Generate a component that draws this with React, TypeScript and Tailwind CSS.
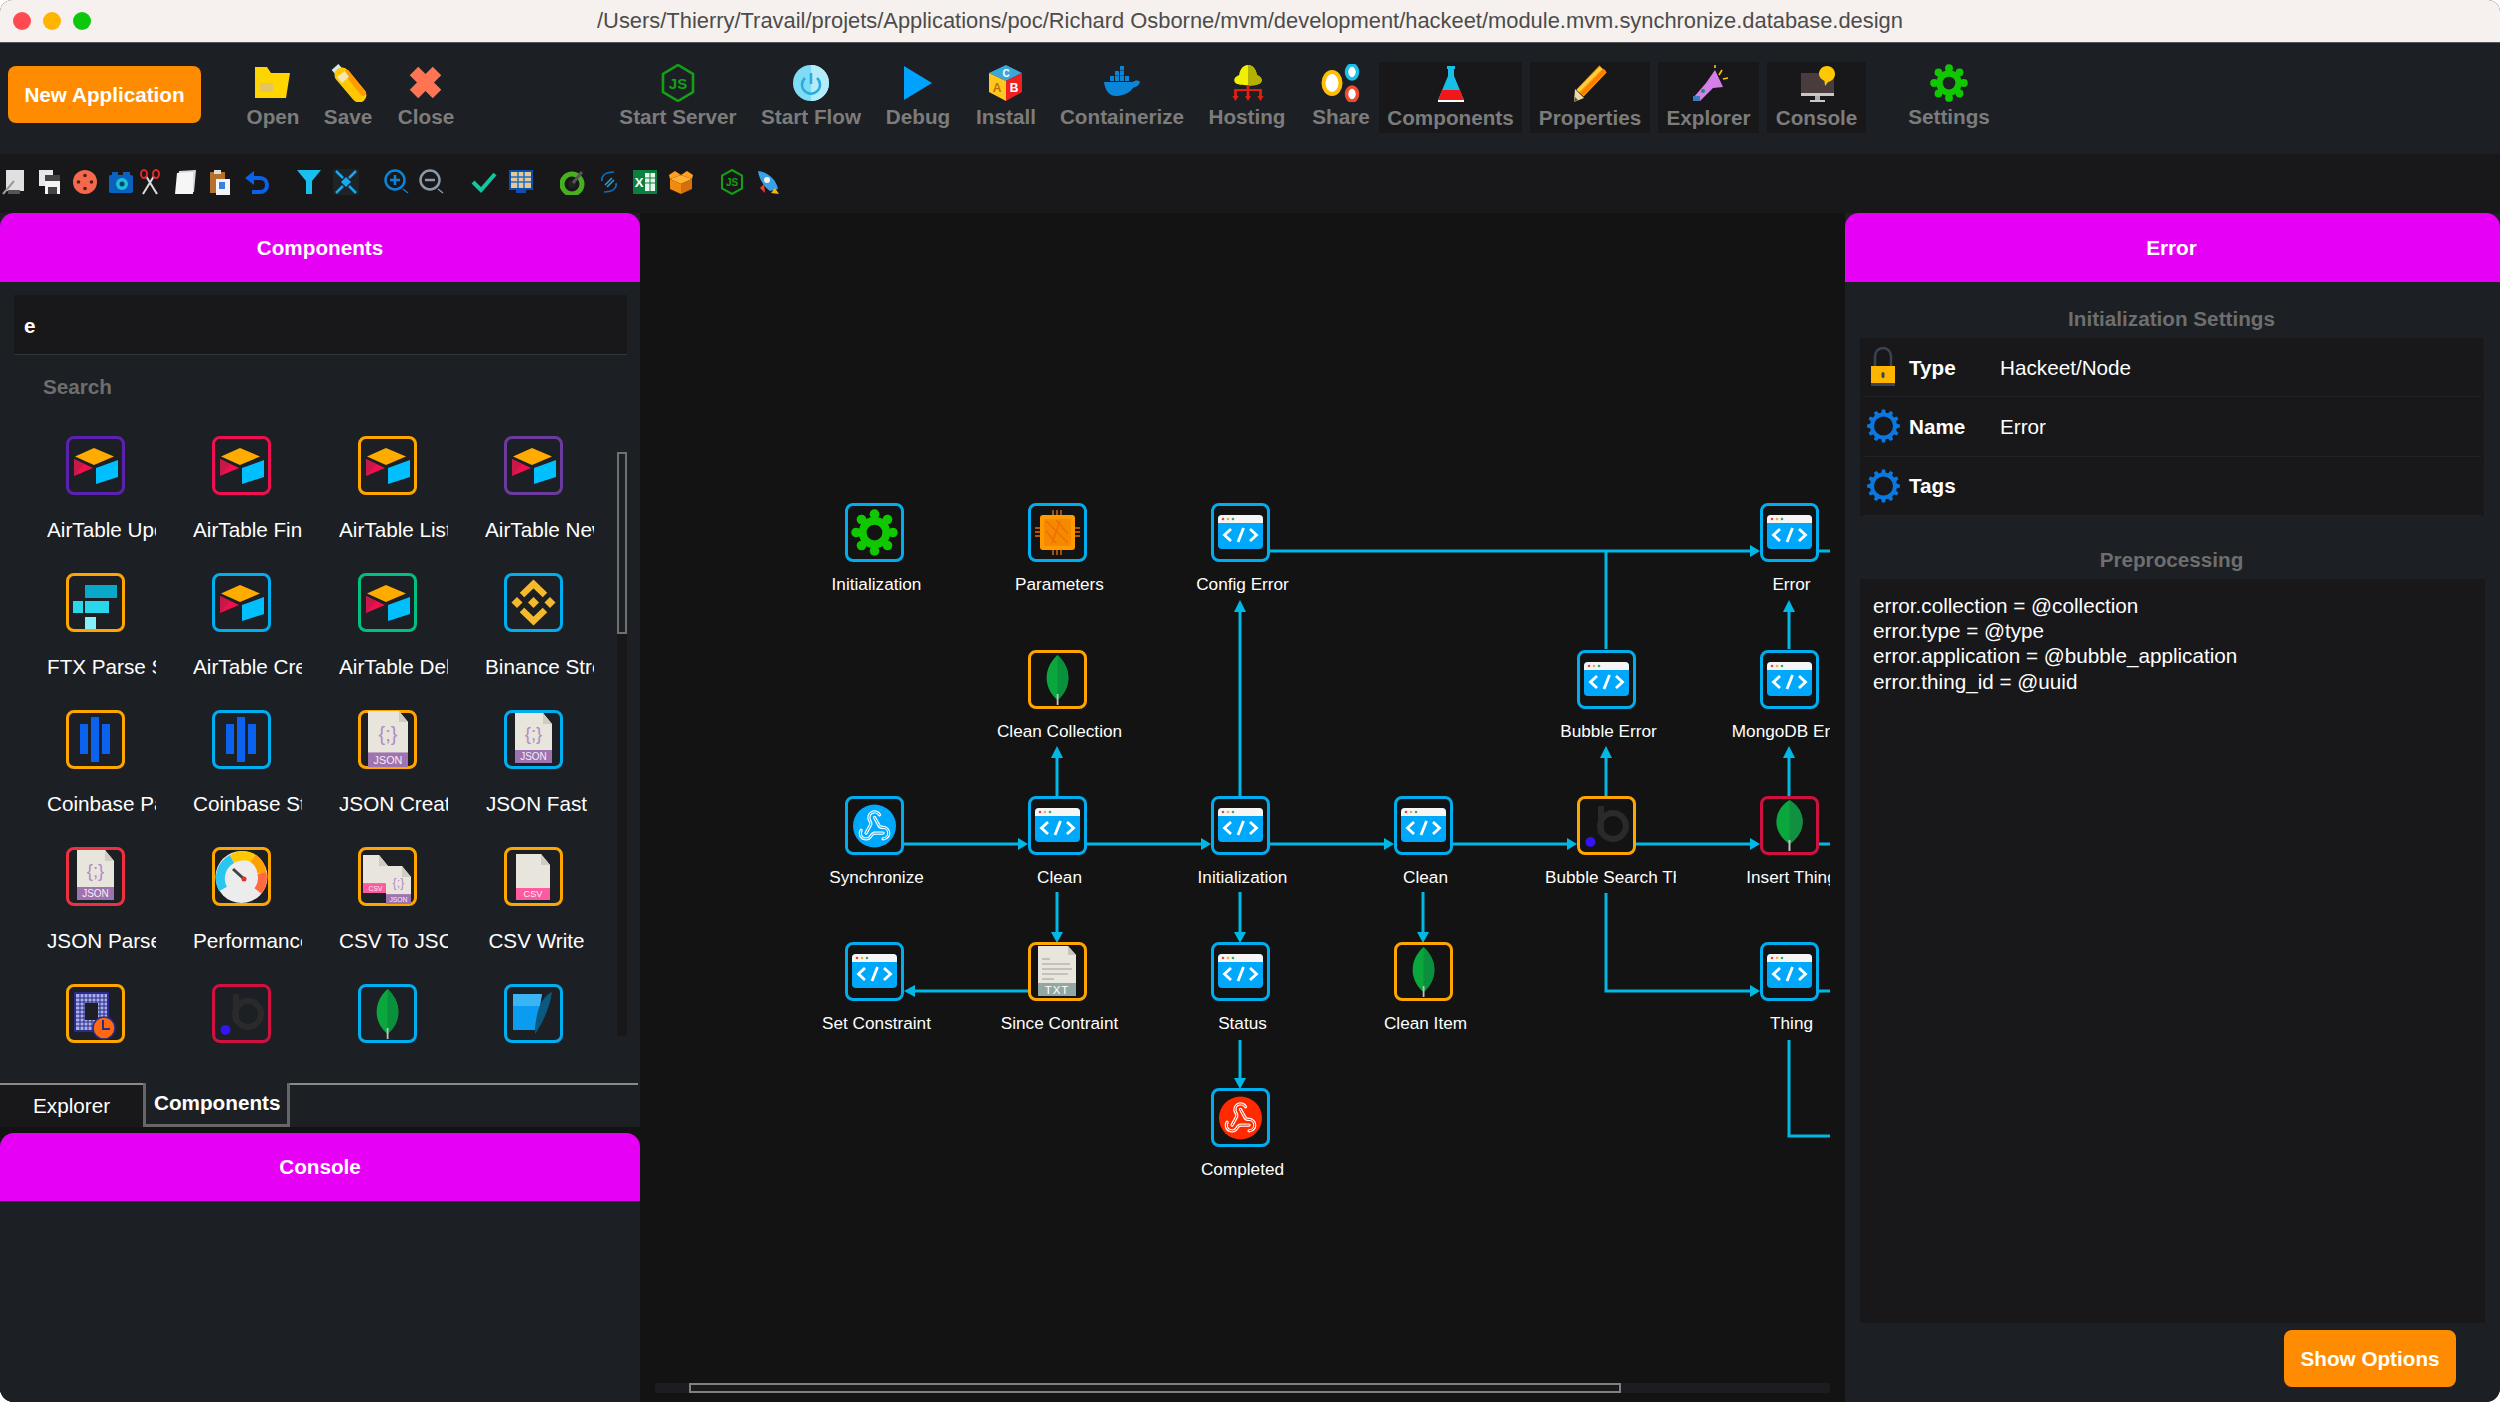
import React from "react";

function gear(cx: number, cy: number, ro: number, ri: number, n: number, hole: number) {
  let d = "";
  const step = (Math.PI * 2) / n;
  for (let i = 0; i < n; i++) {
    const a = i * step - Math.PI / 2;
    const pts: [number, number][] = [
      [ri, a - step * 0.32],
      [ro, a - step * 0.18],
      [ro, a + step * 0.18],
      [ri, a + step * 0.32],
    ];
    pts.forEach(([r, t], k) => {
      d += `${i === 0 && k === 0 ? "M" : "L"}${(cx + r * Math.cos(t)).toFixed(2)} ${(cy + r * Math.sin(t)).toFixed(2)}`;
    });
  }
  d += `Z M${cx - hole} ${cy}a${hole} ${hole} 0 1 0 ${hole * 2} 0a${hole} ${hole} 0 1 0 ${-hole * 2} 0Z`;
  return d;
}

const FF = "Liberation Sans, Arial, sans-serif";

/* lobed green gear: eight rounded teeth around a ring */
const Lobed = ({ cx, cy, s, hole }: { cx: number; cy: number; s: number; hole: string }) => (
  <g fill="#10c800">
    <circle cx={cx} cy={cy} r={15 * s} />
    {[0, 1, 2, 3, 4, 5, 6, 7].map((i) => (
      <circle key={i} cx={cx + 17.5 * s * Math.sin((i * Math.PI) / 4)} cy={cy - 17.5 * s * Math.cos((i * Math.PI) / 4)} r={4.6 * s} />
    ))}
    <circle cx={cx} cy={cy} r={7.5 * s} fill={hole} />
  </g>
);

/* ---------- 59-unit icons ---------- */
const Airtable = () => (
  <g>
    <polygon points="28,12 48,20.5 28,29 9,20.5" fill="#ffab00" />
    <polygon points="8,23 27,32 8,40" fill="#f0104e" />
    <polygon points="8,23 18,28 8,40" fill="#c8184a" />
    <polygon points="52,24 52,41 30,48 30,32" fill="#00bfff" />
  </g>
);
const Code = () => (
  <g>
    <rect x="7" y="12" width="45" height="34" rx="4" fill="#00a8fb" />
    <path d="M7 20v-4a4 4 0 0 1 4-4h37a4 4 0 0 1 4 4v4Z" fill="#f6f6f6" />
    <circle cx="12" cy="16" r="1.3" fill="#f04040" />
    <circle cx="17" cy="16" r="1.3" fill="#f0b030" />
    <circle cx="22" cy="16" r="1.3" fill="#30b070" />
    <g fill="none" stroke="#fff" strokeWidth="2.8">
      <polyline points="20,26 13.5,32 20,38" />
      <polyline points="39,26 45.5,32 39,38" />
      <line x1="32.5" y1="25" x2="27" y2="39" />
    </g>
  </g>
);
const Leaf = () => (
  <g>
    <path d="M29.5 5C44 18 44 38 29.5 50C15 38 15 18 29.5 5Z" fill="#0aa83c" />
    <path d="M29.5 5C44 18 44 38 29.5 50Z" fill="#0a8f3c" />
    <rect x="28.7" y="44" width="1.8" height="11" fill="#c0c0c0" />
  </g>
);
const WideLeaf = () => (
  <g>
    <path d="M29.5 4C47 15 47 36 29.5 48C12 36 12 15 29.5 4Z" fill="#0aa83c" />
    <path d="M29.5 4C47 15 47 36 29.5 48Z" fill="#109040" />
    <rect x="28.5" y="44" width="2" height="11" fill="#c0c0c0" />
  </g>
);
const GearIcon = () => <Lobed cx={29.5} cy={29.5} s={1.05} hole="#131313" />;
const Chip = () => (
  <g>
    <g stroke="#e06a10" strokeWidth="1.4">
      {[25, 29, 33].map((x) => <line key={x} x1={x} y1="7" x2={x} y2="52" />)}
      {[25, 29, 33].map((y) => <line key={y} x1="7" y1={y} x2="52" y2={y} />)}
    </g>
    <rect x="12" y="12" width="35" height="35" rx="3" fill="#ff9a00" />
    <rect x="16" y="16" width="27" height="27" fill="#f58a00" />
    <path d="M18 18l22 22M28 17l12 14M18 28l10 12M32 18l-8 22" stroke="#f07000" strokeWidth="1.6" />
  </g>
);
const hookPaths = [
  "M18 16.98h-5.99c-1.1 0-1.95.94-2.48 1.9A4 4 0 0 1 2 17c.01-.7.2-1.4.57-2",
  "m6 17 3.13-5.78c.53-.97.1-2.18-.5-3.1a4 4 0 1 1 6.89-4.06",
  "m12 6 3.13 5.73C15.66 12.7 16.9 13 18 13a4 4 0 0 1 0 8",
];
const Webhook = ({ fill }: { fill: string }) => (
  <g>
    <circle cx="29.5" cy="30" r="21.5" fill={fill} />
    <g transform="translate(12.5 13) scale(1.42)" fill="none" strokeLinecap="round">
      {hookPaths.map((d) => <path key={d} d={d} stroke="#fff" strokeWidth="2.3" />)}
      {hookPaths.map((d) => <path key={d} d={d} stroke={fill} strokeWidth="0.7" />)}
    </g>
  </g>
);
const Txt = () => (
  <g>
    <path d="M10 4H40L48 13V54H10Z" fill="#e8e6dc" />
    <path d="M40 4V13H48Z" fill="#c8c6bc" />
    <g stroke="#c4c2b8" strokeWidth="2">
      <line x1="14" y1="17" x2="22" y2="17" /><line x1="14" y1="22" x2="42" y2="22" />
      <line x1="14" y1="27" x2="44" y2="27" /><line x1="14" y1="32" x2="40" y2="32" /><line x1="14" y1="37" x2="26" y2="37" />
    </g>
    <rect x="10" y="41" width="38" height="13" fill="#93a8a4" />
    <text x="29" y="52" textAnchor="middle" fontSize="11.5" fontFamily={FF} fill="#fff" letterSpacing="1">TXT</text>
  </g>
);
const Bubble = () => (
  <g>
    <path d="M24 10V38" stroke="#2a2a2a" strokeWidth="6" fill="none" />
    <circle cx="36" cy="30" r="13" stroke="#2a2a2a" strokeWidth="6" fill="none" />
    <circle cx="13.5" cy="46" r="5" fill="#3414f0" />
  </g>
);
const Coinbase = () => (
  <g fill="#0a62ee">
    <rect x="14" y="14" width="8" height="30" />
    <rect x="25" y="7" width="8" height="45" />
    <rect x="36" y="14" width="8" height="30" />
  </g>
);
const Ftx = () => (
  <g>
    <rect x="19" y="12" width="32" height="13" fill="#0aa8c8" />
    <rect x="7" y="28" width="10" height="12" fill="#2ad6ea" />
    <rect x="19" y="28" width="24" height="12" fill="#2ad6ea" />
    <rect x="19" y="44" width="11" height="12" fill="#85f0fa" />
  </g>
);
const Binance = () => (
  <g>
    <path d="M18 22L29.5 11L41 22M18 37L29.5 48L41 37" fill="none" stroke="#f3ba2f" strokeWidth="6.5" />
    <path d="M29.5 24l5.5 5.5-5.5 5.5-5.5-5.5Z" fill="#f3ba2f" />
    <path d="M13 24l5.5 5.5-5.5 5.5-5.5-5.5Z" fill="#f3ba2f" />
    <path d="M46 24l5.5 5.5-5.5 5.5-5.5-5.5Z" fill="#f3ba2f" />
  </g>
);
const FileIcon = ({ x = 12, y = 3, w = 36, h = 51, bar, tag, body }: { x?: number; y?: number; w?: number; h?: number; bar: string; tag: string; body?: string }) => (
  <g>
    <path d={`M${x} ${y}H${x + w - 9}L${x + w} ${y + 11}V${y + h}H${x}Z`} fill="#e8e6dc" />
    <path d={`M${x + w - 9} ${y}V${y + 11}H${x + w}Z`} fill="#cfcdc2" />
    {body && <text x={x + w / 2} y={y + h * 0.54} textAnchor="middle" fontSize={w * 0.5} fontFamily={FF} fill="#b28cc4">{body}</text>}
    <rect x={x} y={y + h * 0.74} width={w} height={h * 0.26} fill={bar} />
    <text x={x + w / 2} y={y + h * 0.94} textAnchor="middle" fontSize={w * 0.27} fontFamily={FF} fill="#f4f0f8">{tag}</text>
  </g>
);
const Gauge = () => (
  <g>
    <circle cx="29.5" cy="30" r="26" fill="#ececec" />
    <path d="M11 42A22 22 0 0 1 20 12" fill="none" stroke="#29c6f0" strokeWidth="9" />
    <path d="M20 12A22 22 0 0 1 41 11" fill="none" stroke="#ffc800" strokeWidth="9" />
    <path d="M41 11A22 22 0 0 1 50 26" fill="none" stroke="#ffa000" strokeWidth="9" />
    <path d="M50 26A22 22 0 0 1 46 44" fill="none" stroke="#ff6a40" strokeWidth="9" />
    <line x1="21" y1="22" x2="32" y2="32" stroke="#444" strokeWidth="3" />
    <circle cx="32" cy="32" r="2.5" fill="#e03030" />
  </g>
);
const Schedule = () => (
  <g>
    <rect x="8" y="8" width="35" height="40" fill="#2a2a88" />
    <rect x="10" y="10" width="31" height="36" fill="#aab0e8" />
    <g stroke="#2a2a88" strokeWidth="1">
      {[14, 18, 22, 26, 30, 34, 38].map((v) => <line key={v} x1={v} y1="10" x2={v} y2="46" />)}
      {[14, 18, 22, 26, 30, 34, 38, 42].map((v) => <line key={v} x1="10" y1={v} x2="41" y2={v} />)}
    </g>
    <rect x="19" y="19" width="13" height="17" fill="#1c2024" />
    <circle cx="38" cy="44" r="11" fill="#ff6a10" stroke="#2a2a88" strokeWidth="1.5" />
    <path d="M37 36v9h7" fill="none" stroke="#2a2a88" strokeWidth="2" />
  </g>
);
const Sqlite = () => (
  <g>
    <path d="M9 10H38L31 46H9Z" fill="#0a9cf0" />
    <path d="M9 10H38L36 22H9Z" fill="#3ab4f4" />
    <path d="M48 8C38 12 31 28 31 50C37 42 46 24 48 8Z" fill="#0a5a80" />
  </g>
);

function Frame({ color, children }: { color: string; children: React.ReactNode }) {
  return (
    <div className={`relative w-[59px] h-[59px] rounded-[8px] border-[3px] ${color}`}>
      <svg className="absolute left-[-3px] top-[-3px]" width="59" height="59" viewBox="0 0 59 59">{children}</svg>
    </div>
  );
}

/* ---------- toolbar icons, 40 units ---------- */
const T: Record<string, React.ReactNode> = {
  open: (<g><path d="M2 3H14L18 9H37L33 34H2Z" fill="#ffd500" /><rect x="7" y="19" width="13" height="9" fill="#e6c560" /></g>),
  save: (<g><line x1="7" y1="3" x2="14" y2="11" stroke="#d6e4ec" strokeWidth="9" /><line x1="14" y1="11" x2="31" y2="31" stroke="#ffc800" strokeWidth="15" strokeLinecap="round" /><line x1="19" y1="9" x2="35" y2="29" stroke="#ff9a00" strokeWidth="6" strokeLinecap="round" /><path d="M9 13l8-6 4 6-7 6Z" fill="#f6e6b0" /></g>),
  close: (<g stroke="#ff7452" strokeWidth="12"><line x1="8" y1="7" x2="31" y2="30" /><line x1="31" y1="7" x2="8" y2="30" /></g>),
  server: (<g><polygon points="20,1 35,10 35,28 20,37 5,28 5,10" fill="none" stroke="#14a014" strokeWidth="2.6" /><text x="20" y="25" textAnchor="middle" fontSize="15" fontWeight="700" fontFamily={FF} fill="#14a014">JS</text></g>),
  flow: (<g><circle cx="20" cy="19" r="18" fill="#7fdcf5" /><path d="M20 1a18 18 0 0 1 0 36Z" fill="#b5ecfa" /><path d="M14 14a9 9 0 1 0 12 0" fill="none" stroke="#29abe2" strokeWidth="2.5" /><line x1="20" y1="9" x2="20" y2="20" stroke="#29abe2" strokeWidth="2.5" /></g>),
  debug: <polygon points="6,2 34,19 6,36" fill="#00a2ff" />,
  install: (<g><polygon points="20,1 36,9 20,17 3,9" fill="#3aa8d8" /><polygon points="3,9 20,17 20,37 3,28" fill="#ffc820" /><polygon points="36,9 20,17 20,37 36,28" fill="#f02020" /><text x="11" y="28" textAnchor="middle" fontSize="12" fontWeight="700" fontFamily={FF} fill="#c07000">A</text><text x="28" y="28" textAnchor="middle" fontSize="12" fontWeight="700" fontFamily={FF} fill="#fff">B</text><text x="20" y="13" textAnchor="middle" fontSize="10" fontWeight="700" fontFamily={FF} fill="#fff">C</text></g>),
  docker: (<g fill="#0a86d8"><path d="M2 18H31C33 16 37 16 38 18C37 22 33 23 31 24C27 30 19 32 14 32C7 32 3 26 2 18Z" /><rect x="8" y="12" width="4" height="5" /><rect x="13" y="12" width="4" height="5" /><rect x="18" y="12" width="4" height="5" /><rect x="23" y="12" width="4" height="5" /><rect x="13" y="7" width="4" height="4.5" /><rect x="18" y="7" width="4" height="4.5" /><rect x="18" y="2" width="4" height="4.5" /></g>),
  hosting: (<g transform="translate(21 0) scale(1.25 1) translate(-20 0)"><path d="M20 1C25 1 27 8 27 11C31 13 32 16 30 19C28 22 12 22 10 19C8 16 9 13 13 11C13 8 15 1 20 1Z" fill="#f0f000" /><path d="M20 1C25 1 27 8 27 11C31 13 32 16 30 19C28 21 24 22 20 22Z" fill="#b4b000" /><g stroke="#e02010" strokeWidth="2.2" fill="none"><line x1="20" y1="21" x2="20" y2="34" /><path d="M10 33V26H30V33" /></g><g fill="#e02010"><polygon points="7.5,32 12.5,32 10,37" /><polygon points="17.5,32 22.5,32 20,37" /><polygon points="27.5,32 32.5,32 30,37" /></g></g>),
  share: (<g fill="none"><ellipse cx="11" cy="19" rx="8.5" ry="11" fill="#fff" stroke="#ffbe00" strokeWidth="4" /><ellipse cx="31" cy="8" rx="5.5" ry="7" fill="#fff" stroke="#18c0e8" strokeWidth="3.5" /><ellipse cx="31" cy="30" rx="5.5" ry="7" fill="#fff" stroke="#f04a30" strokeWidth="3.5" /></g>),
  components: (<g><rect x="16" y="2" width="8" height="3" fill="#18c0e8" /><path d="M17 5H23V12L33 36H7L17 12Z" fill="#18c0e8" /><path d="M11 26H29L33 37H7Z" fill="#f01818" /><rect x="7" y="36" width="26" height="2" fill="#fff" /></g>),
  properties: (<g><line x1="10" y1="29" x2="33" y2="5" stroke="#ffa000" strokeWidth="10" /><line x1="12" y1="30" x2="35" y2="6" stroke="#ff7a00" strokeWidth="3.5" /><line x1="8" y1="27" x2="31" y2="4" stroke="#ffd040" strokeWidth="3" /><polygon points="5,25 14,34 4,38" fill="#f0d8a0" /><polygon points="5,33 8,36 4,38" fill="#555" /></g>),
  explorer: (<g><polygon points="26,6 34,23 24,24 11,37 4,34 17,19" fill="#d67fe8" /><rect x="4" y="32" width="7" height="5" fill="#3a7ac0" /><circle cx="14" cy="27" r="2" fill="#1a9070" /><g stroke="#ffc800" strokeWidth="1.6"><line x1="26" y1="1" x2="26" y2="4" /><line x1="33" y1="6" x2="30" y2="11" /><line x1="39" y1="14" x2="34" y2="15" /></g></g>),
  console: (<g><rect x="4" y="9" width="33" height="20" fill="#4a3c3c" /><rect x="4" y="29" width="33" height="3" fill="#c8c8c8" /><rect x="18" y="32" width="5" height="4" fill="#b0b0b0" /><rect x="13" y="36" width="15" height="2" fill="#c8c8c8" /><path d="M30 2C35 2 38 6 38 10C38 14 35 17 31 18L28 22L27.5 17C24 15 22 13 22 10C22 6 25 2 30 2Z" fill="#ffc800" /></g>),
  settings: <Lobed cx={20} cy={19} s={0.85} hole="#1c2024" />,
};

const group1 = [
  { id: "open", label: "Open", w: "w-[74px]" },
  { id: "save", label: "Save", w: "w-[76px]" },
  { id: "close", label: "Close", w: "w-[80px]" },
];
const group2 = [
  { id: "server", label: "Start Server", w: "w-[126px]" },
  { id: "flow", label: "Start Flow", w: "w-[140px]" },
  { id: "debug", label: "Debug", w: "w-[74px]" },
  { id: "install", label: "Install", w: "w-[102px]" },
  { id: "docker", label: "Containerize", w: "w-[130px]" },
  { id: "hosting", label: "Hosting", w: "w-[120px]" },
  { id: "share", label: "Share", w: "w-[68px]" },
];
const group3 = [
  { id: "components", label: "Components", w: "w-[143px]" },
  { id: "properties", label: "Properties", w: "w-[120px]" },
  { id: "explorer", label: "Explorer", w: "w-[101px]" },
  { id: "console", label: "Console", w: "w-[99px]" },
];

function ToolItem({ id, label, w }: { id: string; label: string; w: string }) {
  return (
    <div className={`${w} flex flex-col items-center pt-[21px]`}>
      <svg width="40" height="38" viewBox="0 0 40 38">{T[id]}</svg>
      <div className="text-[20.7px] leading-[24px] font-bold text-[#7c7c7c] mt-[3px] whitespace-nowrap">{label}</div>
    </div>
  );
}
function ActiveItem({ id, label, w }: { id: string; label: string; w: string }) {
  return (
    <div className={`${w} h-[71px] mt-[19px] bg-[#18181a] flex flex-col items-center pt-[2px]`}>
      <svg width="40" height="38" viewBox="0 0 40 38">{T[id]}</svg>
      <div className="text-[20.7px] leading-[24px] font-bold text-[#7c7c7c] mt-[4px] whitespace-nowrap">{label}</div>
    </div>
  );
}

/* ---------- small toolbar icons, 26 units ---------- */
const small: { m: string; n: React.ReactNode }[] = [
  { m: "ml-[1px]", n: <g><rect x="5" y="1" width="18" height="21" fill="#e0e0e0" /><rect x="7" y="21" width="12" height="4" fill="#555" /><line x1="2" y1="25" x2="13" y2="12" stroke="#999" strokeWidth="2" /></g> },
  { m: "ml-[9px]", n: <g><rect x="3" y="1" width="14" height="16" fill="#e8e8e8" /><rect x="9" y="6" width="15" height="19" fill="#f4f4f4" /><rect x="9" y="6" width="15" height="6" fill="#444" /><rect x="12" y="18" width="9" height="7" fill="#444" /></g> },
  { m: "ml-[10px]", n: <g><circle cx="13" cy="13" r="12" fill="#f4694c" /><g fill="#4a2018"><circle cx="13" cy="6.5" r="1.8" /><circle cx="13" cy="19.5" r="1.8" /><circle cx="6.5" cy="13" r="1.8" /><circle cx="19.5" cy="13" r="1.8" /></g></g> },
  { m: "ml-[10px]", n: <g><rect x="1" y="6" width="24" height="18" rx="2" fill="#0a62c0" /><rect x="4" y="3" width="6" height="4" fill="#0a62c0" /><rect x="15" y="3" width="7" height="4" fill="#0a62c0" /><circle cx="14" cy="15" r="6" fill="#20c0d0" /><circle cx="14" cy="15" r="2.5" fill="#0a4080" /></g> },
  { m: "ml-[3px]", n: <g fill="none"><line x1="6" y1="25" x2="17" y2="7" stroke="#ddd" strokeWidth="2" /><line x1="20" y1="25" x2="9" y2="7" stroke="#ddd" strokeWidth="2" /><ellipse cx="7" cy="5" rx="3" ry="4" stroke="#e02828" strokeWidth="2" /><ellipse cx="19" cy="5" rx="3" ry="4" stroke="#e02828" strokeWidth="2" /></g> },
  { m: "ml-[9px]", n: <g><polygon points="7,2 24,1 22,23 5,24" fill="#d8d8d8" /><polygon points="5,4 21,3 21,25 3,25" fill="#f6f6f6" /></g> },
  { m: "ml-[9px]", n: <g><rect x="3" y="3" width="15" height="21" fill="#b4702c" /><rect x="7" y="1" width="7" height="4" fill="#ddd" /><rect x="9" y="10" width="14" height="16" fill="#f4f4f4" /><rect x="12" y="13" width="6" height="7" fill="#3a80e0" /></g> },
  { m: "ml-[11px]", n: <g fill="none" stroke="#0a62ea" strokeWidth="4"><path d="M8 9H16C20 9 23 12 23 16S20 23 16 23H8" /><polygon points="1,9 10,2 10,16" fill="#0a62ea" stroke="none" /></g> },
  { m: "ml-[26px]", n: <polygon points="1,1 25,1 16,12 16,25 10,25 10,12" fill="#18c0f0" /> },
  { m: "ml-[11px]", n: <g><rect x="0" y="0" width="26" height="26" fill="#1c2428" /><g stroke="#18a8f0" strokeWidth="2.5"><line x1="3" y1="2" x2="10" y2="9" /><line x1="23" y1="2" x2="16" y2="9" /><line x1="3" y1="24" x2="10" y2="17" /><line x1="23" y1="24" x2="16" y2="17" /></g><polygon points="13,8 18,13 13,18 8,13" fill="#18a8f0" /></g> },
  { m: "ml-[25px]", n: <g fill="none" stroke="#0a84d8" strokeWidth="2.5"><circle cx="11" cy="11" r="9.5" /><line x1="11" y1="6" x2="11" y2="16" /><line x1="6" y1="11" x2="16" y2="11" /><line x1="19" y1="20" x2="24" y2="24" strokeWidth="1.5" /></g> },
  { m: "ml-[9px]", n: <g fill="none" stroke="#8a9aa6" strokeWidth="2.5"><circle cx="11" cy="11" r="9.5" /><line x1="6" y1="11" x2="16" y2="11" /><line x1="19" y1="20" x2="24" y2="24" strokeWidth="1.5" /></g> },
  { m: "ml-[26px]", n: <polyline points="2,13 10,21 24,5" fill="none" stroke="#10c8a0" strokeWidth="4" /> },
  { m: "ml-[11px]", n: <g><rect x="1" y="1" width="24" height="20" fill="#0a50b0" /><rect x="3" y="3" width="20" height="16" fill="#e8c890" /><g stroke="#1a70c8" strokeWidth="1.5"><line x1="3" y1="8" x2="23" y2="8" /><line x1="3" y1="13" x2="23" y2="13" /><line x1="10" y1="3" x2="10" y2="19" /><line x1="16" y1="3" x2="16" y2="19" /></g><rect x="8" y="21" width="10" height="3" fill="#0a50b0" /></g> },
  { m: "ml-[26px]", n: <g><circle cx="12" cy="15" r="10" fill="none" stroke="#48b020" strokeWidth="5" /><circle cx="12" cy="15" r="4" fill="#222" /><line x1="13" y1="14" x2="22" y2="3" stroke="#555" strokeWidth="3" /></g> },
  { m: "ml-[10px]", n: <g fill="none" stroke="#0a70c0" strokeWidth="1.6"><path d="M18 3C8 3 5 8 6 12M8 23C18 23 21 18 20 14" /><line x1="9" y1="16" x2="16" y2="9" stroke="#30a0c0" /><line x1="11" y1="18" x2="18" y2="11" stroke="#30a0c0" /></g> },
  { m: "ml-[10px]", n: <g><rect x="1" y="1" width="24" height="24" fill="#0a8040" /><rect x="13" y="4" width="10" height="18" fill="#e8f4ec" /><text x="7" y="18" textAnchor="middle" fontSize="13" fontWeight="700" fontFamily={FF} fill="#fff">X</text><g stroke="#0a8040" strokeWidth="1"><line x1="13" y1="9" x2="23" y2="9" /><line x1="13" y1="14" x2="23" y2="14" /><line x1="18" y1="4" x2="18" y2="22" /></g></g> },
  { m: "ml-[10px]", n: <g><polygon points="13,6 24,10 13,15 2,10" fill="#ffb030" /><polygon points="2,10 13,15 13,25 2,20" fill="#f08a10" /><polygon points="24,10 13,15 13,25 24,20" fill="#d87008" /><polygon points="7,2 13,6 2,10 1,6" fill="#ffa020" /><polygon points="19,2 13,6 24,10 25,6" fill="#ffa020" /></g> },
  { m: "ml-[25px]", n: <g><polygon points="13,1 23,6.5 23,19.5 13,25 3,19.5 3,6.5" fill="none" stroke="#14a014" strokeWidth="2" /><text x="13" y="17" textAnchor="middle" fontSize="10" fontWeight="700" fontFamily={FF} fill="#14a014">JS</text></g> },
  { m: "ml-[10px]", n: <g><path d="M3 2C12 3 21 10 23 20L15 22C9 18 4 10 3 2Z" fill="#3aa0e8" /><path d="M9 15L5 19L10 24Z" fill="#f04030" /><circle cx="12" cy="11" r="3" fill="#f0f0f0" /><path d="M20 19L24 25L16 24Z" fill="#ffb000" /></g> },
];

/* ---------- sidebar data ---------- */
const P = "border-[#5b22b0]", C = "border-[#f00f50]", O = "border-[#ffa500]", V = "border-[#6a3a9c]", B = "border-[#00aef0]", G = "border-[#00c080]", R = "border-[#f03040]", D = "border-[#d01040]";
const comps: { l?: string; c: string; i: React.ReactNode }[] = [
  { l: "AirTable Update", c: P, i: <Airtable /> },
  { l: "AirTable Find", c: C, i: <Airtable /> },
  { l: "AirTable List", c: O, i: <Airtable /> },
  { l: "AirTable New", c: V, i: <Airtable /> },
  { l: "FTX Parse Str", c: O, i: <Ftx /> },
  { l: "AirTable Create", c: B, i: <Airtable /> },
  { l: "AirTable Delete", c: G, i: <Airtable /> },
  { l: "Binance Stream", c: B, i: <Binance /> },
  { l: "Coinbase Parse", c: O, i: <Coinbase /> },
  { l: "Coinbase Str", c: B, i: <Coinbase /> },
  { l: "JSON Create", c: O, i: <FileIcon x={10} y={1} w={40} h={56} bar="#9f72b0" tag="JSON" body="{;}" /> },
  { l: "JSON Fast", c: B, i: <FileIcon x={11} y={3} w={37} h={50} bar="#9f72b0" tag="JSON" body="{;}" /> },
  { l: "JSON Parse", c: R, i: <FileIcon x={11} y={3} w={37} h={50} bar="#9f72b0" tag="JSON" body="{;}" /> },
  { l: "Performance", c: O, i: <Gauge /> },
  { l: "CSV To JSON", c: O, i: <g><FileIcon x={5} y={8} w={25} h={38} bar="#ff5aa0" tag="CSV" /><FileIcon x={28} y={19} w={25} h={38} bar="#9f72b0" tag="JSON" body="{;}" /></g> },
  { l: "CSV Write", c: O, i: <FileIcon x={12} y={7} w={34} h={46} bar="#ff5aa0" tag="CSV" /> },
  { c: O, i: <Schedule /> },
  { c: D, i: <Bubble /> },
  { c: B, i: <Leaf /> },
  { c: B, i: <Sqlite /> },
];

/* ---------- canvas data ---------- */
const nodes: { pos: string; l: string; c: string; i: React.ReactNode }[] = [
  { pos: "left-[158px] top-[290px]", l: "Initialization", c: B, i: <GearIcon /> },
  { pos: "left-[341px] top-[290px]", l: "Parameters", c: B, i: <Chip /> },
  { pos: "left-[524px] top-[290px]", l: "Config Error", c: B, i: <Code /> },
  { pos: "left-[1073px] top-[290px]", l: "Error", c: B, i: <Code /> },
  { pos: "left-[341px] top-[437px]", l: "Clean Collection", c: O, i: <Leaf /> },
  { pos: "left-[890px] top-[437px]", l: "Bubble Error", c: B, i: <Code /> },
  { pos: "left-[1073px] top-[437px]", l: "MongoDB Error", c: B, i: <Code /> },
  { pos: "left-[158px] top-[583px]", l: "Synchronize", c: B, i: <Webhook fill="#00a8fb" /> },
  { pos: "left-[341px] top-[583px]", l: "Clean", c: B, i: <Code /> },
  { pos: "left-[524px] top-[583px]", l: "Initialization", c: B, i: <Code /> },
  { pos: "left-[707px] top-[583px]", l: "Clean", c: B, i: <Code /> },
  { pos: "left-[890px] top-[583px]", l: "Bubble Search Thing", c: O, i: <Bubble /> },
  { pos: "left-[1073px] top-[583px]", l: "Insert Thing", c: D, i: <WideLeaf /> },
  { pos: "left-[158px] top-[729px]", l: "Set Constraint", c: B, i: <Code /> },
  { pos: "left-[341px] top-[729px]", l: "Since Contraint", c: O, i: <Txt /> },
  { pos: "left-[524px] top-[729px]", l: "Status", c: B, i: <Code /> },
  { pos: "left-[707px] top-[729px]", l: "Clean Item", c: O, i: <Leaf /> },
  { pos: "left-[1073px] top-[729px]", l: "Thing", c: B, i: <Code /> },
  { pos: "left-[524px] top-[875px]", l: "Completed", c: B, i: <Webhook fill="#ff2a00" /> },
];

const lines = [
  "M904 844H1020", "M1087 844H1203", "M1270 844H1386", "M1453 844H1569", "M1636 844H1752", "M1819 844H1830",
  "M1057 796V756", "M1240 796V610", "M1057 892V934", "M1240 892V934", "M1423 892V934",
  "M1028 991H914", "M1240 1040V1080", "M1270 551H1752", "M1606 649V551", "M1606 796V756", "M1789 796V756", "M1789 649V610",
  "M1606 893V991H1752", "M1789 1040V1136H1830", "M1819 551H1830", "M1819 991H1830",
];
const heads = [
  "1028,844 1018,838 1018,850", "1211,844 1201,838 1201,850", "1394,844 1384,838 1384,850", "1577,844 1567,838 1567,850", "1760,844 1750,838 1750,850",
  "1057,746 1051,758 1063,758", "1240,600 1234,612 1246,612", "1057,943 1051,932 1063,932", "1240,943 1234,932 1246,932", "1423,943 1417,932 1429,932",
  "904,991 915,985 915,997", "1240,1089 1234,1078 1246,1078", "1760,551 1750,545 1750,557", "1606,746 1600,758 1612,758", "1789,746 1783,758 1795,758", "1789,600 1783,612 1795,612", "1760,991 1750,985 1750,997",
];

const props = [
  { k: "Type", v: "Hackeet/Node", lock: true },
  { k: "Name", v: "Error" },
  { k: "Tags", v: "" },
];

export default function App() {
  return (
    <div className="w-[2500px] h-[1402px] bg-white overflow-hidden font-['Liberation_Sans',Arial,sans-serif]">
      <div className="w-full h-full flex flex-col rounded-t-[12px] rounded-b-[14px] overflow-hidden bg-[#131313]">
        {/* title bar */}
        <div className="relative h-[43px] bg-[#f6f1ee] border-b border-[#555] flex items-center justify-center shrink-0">
          <div className="absolute left-[13px] top-[12px] flex gap-[12px]">
            <span className="w-[18px] h-[18px] rounded-full bg-[#ff4a4f]" />
            <span className="w-[18px] h-[18px] rounded-full bg-[#ffb400]" />
            <span className="w-[18px] h-[18px] rounded-full bg-[#0cc80c]" />
          </div>
          <span className="text-[#4c4c4c] text-[21.9px] leading-none">/Users/Thierry/Travail/projets/Applications/poc/Richard Osborne/mvm/development/hackeet/module.mvm.synchronize.database.design</span>
        </div>

        {/* main toolbar */}
        <div className="h-[111px] shrink-0 bg-[#1c2024] flex items-start">
          <button className="ml-[8px] mt-[23px] w-[193px] h-[57px] rounded-[8px] bg-[#ff8c00] text-white font-bold text-[20.7px]">New Application</button>
          <div className="ml-[35px] flex">{group1.map((g) => <ToolItem key={g.id} {...g} />)}</div>
          <div className="ml-[149px] flex">{group2.map((g) => <ToolItem key={g.id} {...g} />)}</div>
          <div className="ml-[4px] flex gap-[8px]">{group3.map((g) => <ActiveItem key={g.id} {...g} />)}</div>
          <div className="ml-[33px]"><ToolItem id="settings" label="Settings" w="w-[100px]" /></div>
        </div>

        {/* small toolbar */}
        <div className="h-[59px] shrink-0 bg-[#18181a] flex items-center pb-[3px]">
          {small.map((s, i) => (
            <svg key={i} className={`${s.m} shrink-0`} width="26" height="26" viewBox="0 0 26 26">{s.n}</svg>
          ))}
        </div>

        {/* main */}
        <div className="flex-1 flex min-h-0">
          {/* left column */}
          <div className="w-[640px] shrink-0 flex flex-col bg-[#131313]">
            <div className="h-[914px] shrink-0 flex flex-col bg-[#1c2024]">
              <div className="h-[69px] shrink-0 rounded-t-[14px] bg-[#e600f6] flex items-center justify-center text-white font-bold text-[20.7px]">Components</div>
              <div className="mt-[13px] ml-[14px] mr-[13px] h-[60px] bg-[#18181a] border-b border-[#33363b] flex items-center pl-[10px] pt-[3px] text-white font-bold text-[20.7px]">e</div>
              <div className="mt-[20px] pl-[43px] text-[20.7px] leading-[24px] font-bold text-[#6e6e6e]">Search</div>
              <div className="mt-[37px] flex flex-1 min-h-0">
                <div className="pl-[47px] w-[617px] shrink-0 grid grid-cols-[repeat(4,146px)] auto-rows-[137px]">
                  {comps.map((c, i) => (
                    <div key={i} className="w-[109px] overflow-hidden">
                      <div className="ml-[19px]"><Frame color={c.c}>{c.i}</Frame></div>
                      {c.l && <div className="mt-[23px] w-[103px] text-center whitespace-nowrap text-[20.7px] leading-[24px] text-white">{c.l}</div>}
                    </div>
                  ))}
                </div>
                <div className="mt-[16px] w-[10px] h-[584px] bg-[#18181a] shrink-0">
                  <div className="h-[182px] border-[2px] border-[#707070] bg-[#1c2024]" />
                </div>
              </div>
              <div className="h-[44px] shrink-0 flex">
                <div className="w-[143px] bg-[#18181a] border-t-2 border-[#8a8a8a] flex items-center pl-[33px] text-white text-[20.7px]">Explorer</div>
                <div className="w-[147px] bg-[#1c2024] border-x-[3px] border-b-[3px] border-[#666] flex items-center pl-[8px] pb-[1px] text-white font-bold text-[20.7px]">Components</div>
                <div className="flex-1 border-t-2 border-[#8a8a8a] mr-[2px]" />
              </div>
            </div>
            <div className="mt-[6px] flex-1 flex flex-col bg-[#1c2024] rounded-t-[14px]">
              <div className="h-[68px] shrink-0 rounded-t-[14px] bg-[#e600f6] flex items-center justify-center text-white font-bold text-[20.7px]">Console</div>
            </div>
          </div>

          {/* centre */}
          <div className="flex-1 min-w-0 flex flex-col px-[15px] pb-[9px] bg-[#131313]">
            <div className="relative flex-1 overflow-hidden">
              <svg className="absolute left-0 top-0" width="1175" height="1170" viewBox="655 213 1175 1170">
                <g fill="none" stroke="#00b8e6" strokeWidth="3">
                  {lines.map((d) => <path key={d} d={d} />)}
                </g>
                <g fill="#00b8e6">
                  {heads.map((p) => <polygon key={p} points={p} />)}
                </g>
              </svg>
              {nodes.map((n, i) => (
                <div key={i} className={`absolute ${n.pos} w-[131px] overflow-hidden`}>
                  <div className="ml-[32px]"><Frame color={n.c}>{n.i}</Frame></div>
                  <div className="mt-[10.5px] w-[127px] text-center whitespace-nowrap text-[17.2px] leading-[22px] text-white">{n.l}</div>
                </div>
              ))}
            </div>
            <div className="h-[10px] shrink-0 bg-[#1b1d20] pl-[34px]">
              <div className="w-[932px] h-full border-[2px] border-[#808080] bg-[#1a1a1c]" />
            </div>
          </div>

          {/* right panel */}
          <div className="w-[655px] shrink-0 flex flex-col bg-[#1c2024]">
            <div className="h-[69px] shrink-0 rounded-t-[14px] bg-[#e600f6] flex items-center justify-center pr-[2px] text-white font-bold text-[20.7px]">Error</div>
            <div className="mt-[25px] h-[24px] pr-[2px] text-center text-[20.7px] leading-[24px] font-bold text-[#6e6e6e]">Initialization Settings</div>
            <div className="mt-[7px] mx-[15px] h-[178px] bg-[#18181a] border-r border-[#1f2226] flex flex-col px-[3px]">
              {props.map((p) => (
                <div key={p.k} className="h-[59.5px] border-b border-[#202226] flex items-center">
                  <svg className="ml-[4px] shrink-0" width="33" height="40" viewBox="0 0 33 40">
                    {p.lock ? (
                      <g>
                        <path d="M8 19V9a8 8 0 0 1 16 0v10" fill="none" stroke="#3a4256" strokeWidth="2.5" />
                        <rect x="4" y="19" width="24" height="17" fill="#ffb400" />
                        <rect x="4" y="36" width="24" height="3" fill="#3a4256" />
                        <rect x="14.5" y="25" width="3" height="6" rx="1.5" fill="#3a4256" />
                      </g>
                    ) : (
                      <path d={gear(16.5, 20, 16.5, 13.5, 12, 9.5)} fill="#0a78e0" fillRule="evenodd" />
                    )}
                  </svg>
                  <span className="ml-[9px] w-[91px] shrink-0 font-bold text-[20.7px] text-white">{p.k}</span>
                  <span className="text-[20.7px] text-white">{p.v}</span>
                </div>
              ))}
            </div>
            <div className="mt-[32px] h-[24px] pr-[2px] text-center text-[20.7px] leading-[24px] font-bold text-[#6e6e6e]">Preprocessing</div>
            <div className="mt-[7px] mx-[15px] h-[744px] bg-[#18181a] pl-[13px] pt-[14px] text-[20.7px] leading-[25.2px] text-white">
              <div>error.collection = @collection</div>
              <div>error.type = @type</div>
              <div>error.application = @bubble_application</div>
              <div>error.thing_id = @uuid</div>
            </div>
            <div className="mt-[7px] flex justify-end pr-[44px]">
              <button className="w-[172px] h-[57px] rounded-[8px] bg-[#ff8c00] text-white font-bold text-[20.7px]">Show Options</button>
            </div>
          </div>
        </div>
      </div>
    </div>
  );
}
